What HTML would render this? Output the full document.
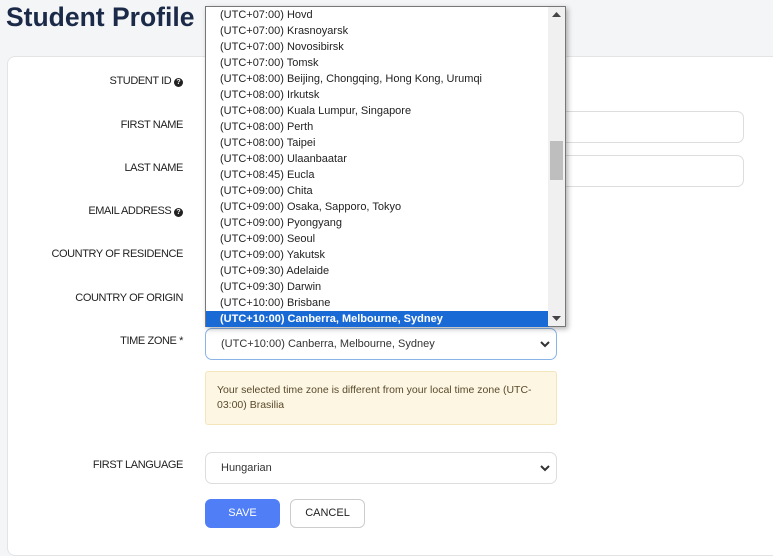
<!DOCTYPE html>
<html><head><style>
*{box-sizing:border-box;margin:0;padding:0}
body{width:773px;height:542px;overflow:hidden;background:#f4f5f6;font-family:"Liberation Sans",sans-serif;position:relative;color:#333}
h1{position:absolute;left:6px;top:2px;font-size:26.5px;font-weight:bold;color:#1b2a48;letter-spacing:0px}
.card{position:absolute;left:7px;top:56px;width:780px;height:500px;background:#fff;border:1px solid #e3e4e6;border-radius:8px}
.lbl{position:absolute;right:590px;font-size:11px;color:#222;text-align:right;white-space:nowrap;letter-spacing:-0.4px}
.q{display:inline-block;width:9px;height:9px;border-radius:50%;background:#222;color:#fff;font-size:7px;font-weight:bold;text-align:center;line-height:9px;vertical-align:0;letter-spacing:0}
.inp{position:absolute;left:205px;width:539px;height:32px;border:1px solid #ddd;border-radius:7px;background:#fff}
.sel{position:absolute;left:205px;width:352px;height:32px;border:1px solid #ddd;border-radius:7px;background:#fff;font-size:11px;padding:9px 0 0 15px;color:#333}
.sel svg{position:absolute;right:6px;top:11px}
.dd{position:absolute;left:205px;top:6px;width:361px;height:321px;background:#fff;border:1px solid #777;box-shadow:2px 2px 5px rgba(0,0,0,.3)}
.dd div.r{height:16px;line-height:16px;font-size:11px;padding-left:14px;color:#222;width:343px}
.dd div.s{background:#1a6ad6;color:#fff;font-weight:bold}
.sb{position:absolute;right:0;top:0;width:17px;height:319px;background:#f0f0f0}
.th{position:absolute;left:2px;top:134px;width:13px;height:39px;background:#bebebe}
</style></head><body>
<h1>Student Profile</h1>
<div class="card"></div>
<div class="lbl" style="top:75px">STUDENT ID <span class="q">?</span></div>
<div class="lbl" style="top:119px">FIRST NAME</div>
<div class="lbl" style="top:162px">LAST NAME</div>
<div class="lbl" style="top:205px">EMAIL ADDRESS <span class="q">?</span></div>
<div class="lbl" style="top:248px">COUNTRY OF RESIDENCE</div>
<div class="lbl" style="top:292px">COUNTRY OF ORIGIN</div>
<div class="lbl" style="top:335px">TIME ZONE *</div>
<div class="lbl" style="top:459px">FIRST LANGUAGE</div>
<div class="inp" style="top:111px"></div>
<div class="inp" style="top:155px"></div>
<div class="sel" style="top:328px;border-color:#8ab4e8">(UTC+10:00) Canberra, Melbourne, Sydney<svg width="10" height="8"><path d="M1 2l4 4 4-4" stroke="#333" stroke-width="2" fill="none"/></svg></div>
<div style="position:absolute;left:205px;top:371px;width:352px;height:54px;background:#fcf6e2;border:1px solid #f3e6bd;border-radius:3px;font-size:10.5px;line-height:15px;padding:11px 11px;color:#5a4a2c">Your selected time zone is different from your local time zone (UTC-03:00) Brasilia</div>
<div class="sel" style="top:452px">Hungarian<svg width="10" height="8"><path d="M1 2l4 4 4-4" stroke="#333" stroke-width="2" fill="none"/></svg></div>
<div style="position:absolute;left:205px;top:499px;width:75px;height:29px;background:#4f7ef7;border-radius:6px;color:#fff;font-size:11px;text-align:center;line-height:29px">SAVE</div>
<div style="position:absolute;left:290px;top:499px;width:75px;height:29px;background:#fff;border:1px solid #ccc;border-radius:6px;color:#222;font-size:11px;text-align:center;line-height:27px">CANCEL</div>
<div class="dd">
<div class="r">(UTC+07:00) Hovd</div>
<div class="r">(UTC+07:00) Krasnoyarsk</div>
<div class="r">(UTC+07:00) Novosibirsk</div>
<div class="r">(UTC+07:00) Tomsk</div>
<div class="r">(UTC+08:00) Beijing, Chongqing, Hong Kong, Urumqi</div>
<div class="r">(UTC+08:00) Irkutsk</div>
<div class="r">(UTC+08:00) Kuala Lumpur, Singapore</div>
<div class="r">(UTC+08:00) Perth</div>
<div class="r">(UTC+08:00) Taipei</div>
<div class="r">(UTC+08:00) Ulaanbaatar</div>
<div class="r">(UTC+08:45) Eucla</div>
<div class="r">(UTC+09:00) Chita</div>
<div class="r">(UTC+09:00) Osaka, Sapporo, Tokyo</div>
<div class="r">(UTC+09:00) Pyongyang</div>
<div class="r">(UTC+09:00) Seoul</div>
<div class="r">(UTC+09:00) Yakutsk</div>
<div class="r">(UTC+09:30) Adelaide</div>
<div class="r">(UTC+09:30) Darwin</div>
<div class="r">(UTC+10:00) Brisbane</div>
<div class="r s">(UTC+10:00) Canberra, Melbourne, Sydney</div>
<div class="sb"><div class="th"></div>
<svg style="position:absolute;left:4px;top:5px" width="9" height="6"><path d="M0 5L4.5 0 9 5z" fill="#444"/></svg>
<svg style="position:absolute;left:4px;top:309px" width="9" height="6"><path d="M0 0L4.5 5 9 0z" fill="#444"/></svg>
</div>
</div>
</body></html>
